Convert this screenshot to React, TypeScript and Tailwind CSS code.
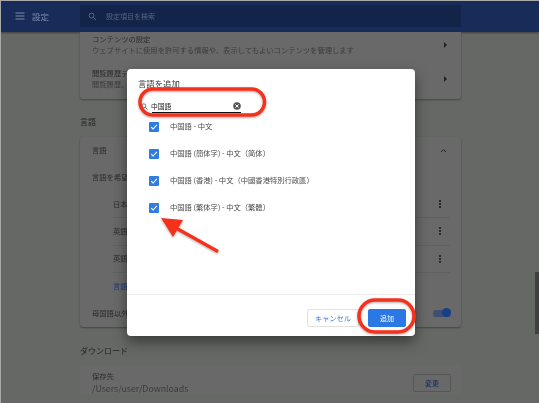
import React from "react";

function Dots() {
  return (
    <div className="flex flex-col gap-[1px]">
      <span className="w-[2px] h-[2px] bg-[#2a2a2a]" />
      <span className="w-[2px] h-[2px] bg-[#2a2a2a]" />
      <span className="w-[2px] h-[2px] bg-[#2a2a2a]" />
    </div>
  );
}

function Caret() {
  return <div className="w-0 h-0 border-y-[3px] border-y-transparent border-l-[3px] border-l-[#222]" />;
}

function LangRow({ label, line = true }: { label: string; line?: boolean }) {
  return (
    <div className={`h-[27.3px] ml-[33px] mr-[11px] pr-[9px] flex items-center justify-between text-[7.3px] text-[#2b2b2b] ${line ? "border-b border-[#5f605f]" : ""}`}>
      <span className="whitespace-nowrap">{label}</span>
      <Dots />
    </div>
  );
}

function Check({ label }: { label: string }) {
  return (
    <div className="h-[27px] flex items-center pl-[22px] gap-[11px]">
      <div className="w-[10px] h-[10px] rounded-[1px] bg-[#2f7de1] flex items-center justify-center">
        <svg width="8" height="8" viewBox="0 0 8 8">
          <path d="M1.2 4.2 L3.1 6 L6.9 1.9" stroke="#fff" strokeWidth="1.1" fill="none" />
        </svg>
      </div>
      <span className="text-[7.3px] text-[#4b4b4b] whitespace-nowrap">{label}</span>
    </div>
  );
}

export default function App() {
  return (
    <div className="w-[539px] h-[403px] overflow-hidden bg-[#666866]">
      <div className="relative w-[539px] h-[403px] overflow-hidden bg-[#666866] blur-[0.35px] font-['Noto_Sans_CJK_JP','Noto_Sans',sans-serif] border-l border-t border-[#a9a9a9]">
        {/* Header */}
        <header className="h-[31px] pb-[1px] bg-[#182c59] flex items-center shadow-[0_1px_2px_rgba(0,0,0,0.4)]">
          <div className="w-[79px] pl-[14px] flex items-center gap-[4px]">
            <svg width="10" height="8" viewBox="0 0 10 8">
              <path d="M0.5 1h9M0.5 4h9M0.5 7h9" stroke="#7f8ca5" strokeWidth="1" />
            </svg>
            <span className="text-[8.5px] text-[#7f8ca5] ml-[3px]">設定</span>
          </div>
          <div className="w-[381px] h-[22px] bg-[#12244a] flex items-center pl-[8px] gap-[9px]">
            <svg width="9" height="9" viewBox="0 0 10 10" fill="none">
              <circle cx="4" cy="4" r="2.7" stroke="#5f6d88" strokeWidth="1" />
              <path d="M6 6 L9 9" stroke="#5f6d88" strokeWidth="1.1" />
            </svg>
            <span className="text-[7px] text-[#56647f]">設定項目を検索</span>
          </div>
        </header>

        {/* Page */}
        <main className="w-[381px] ml-[79px] flex flex-col text-[#2b2b2b]">
          <section className="h-[67px] bg-[#686968] rounded-b-[3px] shadow-[0_1px_2px_rgba(0,0,0,0.35)] text-[7.3px]">
            <div className="h-[26px] pl-[12px] pr-[14px] flex items-center justify-between">
              <div className="leading-[11px]">
                <div>コンテンツの設定</div>
                <div className="text-[#3c3c3c]">ウェブサイトに使用を許可する情報や、表示してもよいコンテンツを管理します</div>
              </div>
              <Caret />
            </div>
            <div className="h-[41px] pl-[12px] pr-[14px] flex items-center justify-between">
              <div className="leading-[11px] whitespace-nowrap">
                <div>閲覧履歴デ</div>
                <div className="text-[#3c3c3c]">閲覧履歴、</div>
              </div>
              <Caret />
            </div>
          </section>

          <h2 className="text-[8px] h-[38px] pt-[8px] flex items-center text-[#222]">言語</h2>

          <section className="h-[190px] bg-[#686968] rounded-[3px] shadow-[0_1px_2px_rgba(0,0,0,0.35)] text-[7.3px]">
            <div className="h-[27px] pl-[12px] pr-[14px] flex items-center justify-between">
              <span>言語</span>
              <svg width="7" height="5" viewBox="0 0 7 5" fill="none">
                <path d="M1 4 L3.5 1.5 L6 4" stroke="#222" strokeWidth="1" />
              </svg>
            </div>
            <div className="h-[27px] pl-[12px] flex items-center whitespace-nowrap">言語を希望</div>
            <LangRow label="日本" />
            <LangRow label="英語" />
            <LangRow label="英語" />
            <div className="h-[27px] ml-[33px] flex items-center text-[#1d3a78] whitespace-nowrap">言語</div>
            <div className="h-[27px] pl-[12px] pr-[10px] flex items-center justify-between">
              <span className="whitespace-nowrap">母国語以外</span>
              <div className="relative w-[18px] h-[7px] rounded-full bg-[#3d4f72]">
                <div className="absolute right-0 top-[-1.5px] w-[9px] h-[9px] rounded-full bg-[#173f87]" />
              </div>
            </div>
          </section>

          <h2 className="text-[8px] h-[38px] pt-[9px] flex items-center text-[#222]">ダウンロード</h2>

          <section className="flex-1 bg-[#686968] rounded-t-[3px] h-[60px] pl-[12px] pr-[10px] pt-[6px] flex items-start justify-between text-[7.3px]">
            <div className="leading-[11px]">
              <div>保存先</div>
              <div className="text-[#3c3c3c] text-[8.8px] mt-[1px]">/Users/user/Downloads</div>
            </div>
            <div className="w-[38px] h-[18px] mt-[3px] border border-[#555755] rounded-[2px] flex items-center justify-center text-[7px] text-[#16305f] font-medium">変更</div>
          </section>
        </main>

        {/* Scrollbar */}
        <div className="absolute left-[534px] top-[271px] w-[4px] h-[62px] bg-[#3f403f]" />

        {/* Dialog */}
        <div className="absolute left-[126px] top-[68px] w-[288px] h-[267px] bg-white rounded-[4px] shadow-[0_6px_14px_rgba(0,0,0,0.45)] flex flex-col">
          <div className="text-[8.4px] text-[#333] pl-[11px] pt-[8px] h-[27px]">言語を追加</div>
          <div className="h-[18px]" />
          <div className="flex-1 mt-[-1px]">
            <Check label="中国語 - 中文" />
            <Check label="中国語 (簡体字) - 中文（简体）" />
            <Check label="中国語 (香港) - 中文（中國香港特別行政區）" />
            <Check label="中国語 (繁体字) - 中文（繁體）" />
          </div>
          <div className="h-[42px] border-t border-[#ececec] flex items-center justify-end gap-[9px] pr-[9px] pt-[5px]">
            <div className="w-[52px] h-[18px] rounded-[2px] border border-[#e2e2e2] flex items-center justify-center text-[7.2px] text-[#2f7de1]">キャンセル</div>
            <div className="w-[38px] h-[18px] rounded-[2px] bg-[#2a78e4] flex items-center justify-center text-[7px] text-white">追加</div>
          </div>

          {/* Search field */}
          <div className="absolute left-[14px] top-[28px] w-[100px] h-[18px] flex items-center">
            <svg width="7" height="7" viewBox="0 0 7 7" fill="none">
              <circle cx="2.8" cy="2.8" r="2" stroke="#555" strokeWidth="0.8" />
              <path d="M4.3 4.3 L6.6 6.6" stroke="#555" strokeWidth="0.8" />
            </svg>
            <span className="ml-[3px] text-[6.8px] text-[#222]">中国語</span>
          </div>
          <div className="absolute left-[25px] top-[43px] w-[89px] h-[1px] bg-[#111]" />
          <svg className="absolute left-[106px] top-[33px]" width="8" height="8" viewBox="0 0 8 8">
            <circle cx="4" cy="4" r="3.8" fill="#555" />
            <path d="M2.4 2.4 L5.6 5.6 M5.6 2.4 L2.4 5.6" stroke="#fff" strokeWidth="1" />
          </svg>
        </div>

        {/* Red annotations */}
        <svg className="absolute left-[-1px] top-[-1px]" width="539" height="403" viewBox="0 0 539 403" fill="none">
          <defs>
            <filter id="s" x="-20%" y="-20%" width="140%" height="150%">
              <feDropShadow dx="0" dy="1" stdDeviation="1" floodColor="#000" floodOpacity="0.35" />
            </filter>
          </defs>
          <g filter="url(#s)">
            <rect x="140" y="89" width="124.5" height="26" rx="13" stroke="#f4301f" strokeWidth="3.5" />
            <rect x="359" y="300" width="55" height="32" rx="16" stroke="#f4301f" strokeWidth="3.5" />
            <path d="M218 251.5 L176 228" stroke="#f4301f" strokeWidth="3.2" />
            <path d="M161 218 L183 220 L173 237 Z" fill="#f4301f" />
          </g>
        </svg>
      </div>
    </div>
  );
}
